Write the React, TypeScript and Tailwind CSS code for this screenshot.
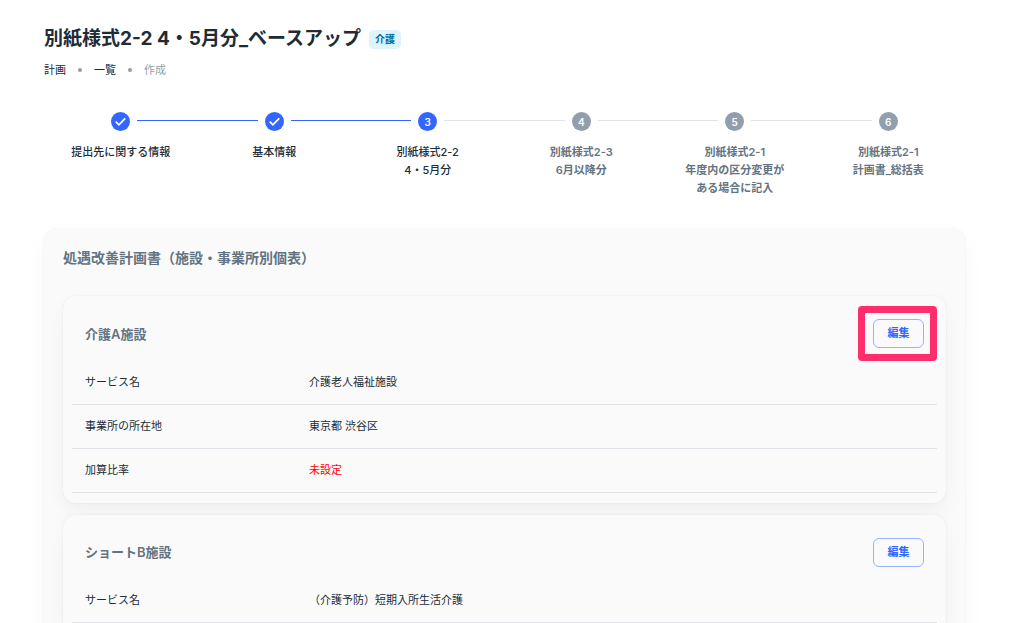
import { clsx } from "clsx";

type StepState = "done" | "current" | "upcoming";

const STEPS: { lines: string[]; state: StepState }[] = [
  { lines: ["提出先に関する情報"], state: "done" },
  { lines: ["基本情報"], state: "done" },
  { lines: ["別紙様式2-2", "4・5月分"], state: "current" },
  { lines: ["別紙様式2-3", "6月以降分"], state: "upcoming" },
  { lines: ["別紙様式2-1", "年度内の区分変更が", "ある場合に記入"], state: "upcoming" },
  { lines: ["別紙様式2-1", "計画書_総括表"], state: "upcoming" },
];

type Row = { label: string; value: string; missing?: boolean };

const FACILITIES: { name: string; highlighted?: boolean; rows: Row[] }[] = [
  {
    name: "介護A施設",
    highlighted: true,
    rows: [
      { label: "サービス名", value: "介護老人福祉施設" },
      { label: "事業所の所在地", value: "東京都 渋谷区" },
      { label: "加算比率", value: "未設定", missing: true },
    ],
  },
  {
    name: "ショートB施設",
    rows: [{ label: "サービス名", value: "（介護予防）短期入所生活介護" }],
  },
];

function Breadcrumbs() {
  return (
    <nav aria-label="パンくず" className="mt-2">
      <ol className="flex items-center text-[11px] leading-[18px] text-[#212b36]">
        <li>
          <a href="#plan">計画</a>
        </li>
        <li aria-hidden="true" className="mx-3 size-1 rounded-full bg-[#919eab]" />
        <li>
          <a href="#list">一覧</a>
        </li>
        <li aria-hidden="true" className="mx-3 size-1 rounded-full bg-[#919eab]" />
        <li aria-current="page" className="text-[#919eab]">
          作成
        </li>
      </ol>
    </nav>
  );
}

function StepIcon({ state, index }: { state: StepState; index: number }) {
  if (state === "done") {
    return (
      <svg viewBox="2 2 20 20" className="size-[19px] text-[#3366ff]" aria-hidden="true">
        <circle cx="12" cy="12" r="10" fill="currentColor" />
        <path d="M7 12.2l3.3 3.3 6.7-6.7" fill="none" stroke="#fff" strokeWidth="1.9" />
      </svg>
    );
  }
  return (
    <span
      className={clsx(
        "flex size-[19px] items-center justify-center rounded-full text-[10px] leading-none font-semibold text-white",
        state === "current" ? "bg-[#3366ff]" : "bg-[#919eab]",
      )}
    >
      {index + 1}
    </span>
  );
}

/** Each step draws its two half connectors, so lines meet at the column edges. */
function Stepper() {
  return (
    <ol className="mt-[33px] grid min-h-[89px] grid-cols-6">
      {STEPS.map(({ lines, state }, i) => {
        const next = STEPS[i + 1];
        return (
          <li key={i} className="flex flex-col items-center">
            <div className="flex w-full gap-[7px]">
              <span
                className={clsx(
                  "mt-2 h-px flex-1",
                  i > 0 && (state === "upcoming" ? "bg-[#dfe3e8]" : "bg-[#3366ff]"),
                )}
              />
              <StepIcon state={state} index={i} />
              <span
                className={clsx(
                  "mt-2 h-px flex-1",
                  next && (next.state === "upcoming" ? "bg-[#dfe3e8]" : "bg-[#3366ff]"),
                )}
              />
            </div>
            <p
              className={clsx(
                "mt-3 text-center text-[11px] leading-[18px]",
                state === "upcoming" ? "font-semibold text-[#637381]" : "font-medium text-[#212b36]",
              )}
            >
              {lines.map((line) => (
                <span key={line} className="block whitespace-nowrap">
                  {line}
                </span>
              ))}
            </p>
          </li>
        );
      })}
    </ol>
  );
}

function FacilityCard({ name, highlighted, rows }: (typeof FACILITIES)[number]) {
  return (
    <article className="rounded-[13px] bg-[#fafafa] px-[9px] pb-[10px] shadow-[0_0_2px_rgba(145,158,171,0.2),0_10px_20px_-3px_rgba(145,158,171,0.12)]">
      <header className="flex items-center justify-between px-[13px] pt-[23px] pb-3">
        <h3 className="text-[13px] leading-5 font-semibold text-[#637381]">{name}</h3>
        <div className="relative">
          <button
            type="button"
            className="block h-[29px] w-[51px] rounded-md border border-[#99b2ff] text-[11px] font-bold text-[#3366ff]"
          >
            編集
          </button>
          {highlighted && (
            <span className="pointer-events-none absolute -inset-y-[13px] -right-[13px] -left-[15px] rounded-sm border-[7px] border-[#ff2d6b]" />
          )}
        </div>
      </header>
      <table className="w-full table-fixed border-collapse text-[11px] leading-[18px] text-[#212b36]">
        <tbody>
          {rows.map((row) => (
            <tr key={row.label} className="h-11 border-b border-[#dfe3e8]">
              <th scope="row" className="w-[224px] px-[13px] text-left font-normal">
                {row.label}
              </th>
              <td className={clsx("px-[13px]", row.missing && "text-[#ff0000]")}>{row.value}</td>
            </tr>
          ))}
        </tbody>
      </table>
    </article>
  );
}

export default function App() {
  return (
    <main
      lang="ja"
      className="min-h-screen bg-white pt-[25px] pr-[71px] pl-11 font-['Inter','Noto_Sans_CJK_JP',sans-serif] text-[#212b36]"
    >
      <div className="flex items-center gap-2">
        <h1 className="text-[19px] leading-7 font-bold">別紙様式2-2 4・5月分_ベースアップ</h1>
        <span className="rounded-[5px] bg-[#def3fb] px-1.5 text-[10px] leading-[19px] font-bold text-[#006c9c]">
          介護
        </span>
      </div>
      <Breadcrumbs />
      <Stepper />

      <section className="mt-7 rounded-[13px] bg-[#fafafa] px-[19px] pt-[18px] pb-5 shadow-[0_0_2px_rgba(145,158,171,0.2),0_10px_20px_-3px_rgba(145,158,171,0.12)]">
        <h2 className="text-sm leading-[22px] font-semibold text-[#637381]">
          処遇改善計画書（施設・事業所別個表）
        </h2>
        <div className="mt-[27px] flex flex-col gap-3">
          {FACILITIES.map((facility) => (
            <FacilityCard key={facility.name} {...facility} />
          ))}
        </div>
      </section>
    </main>
  );
}
